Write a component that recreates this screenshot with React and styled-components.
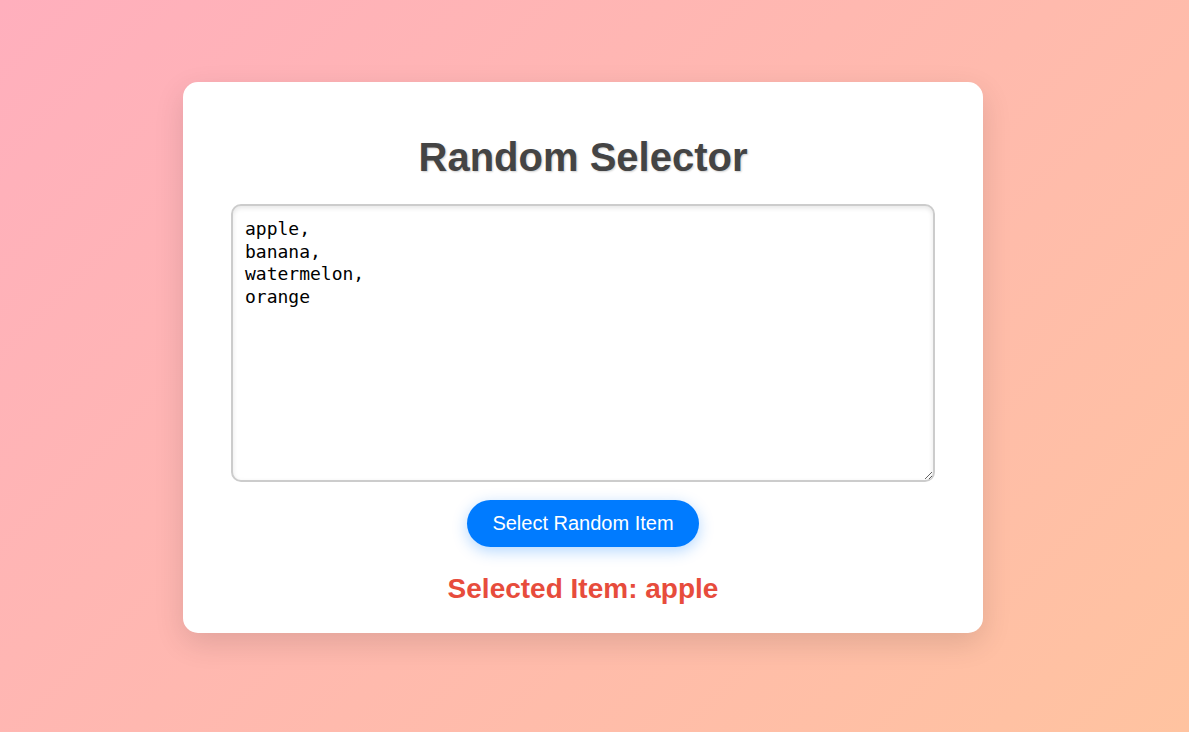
import React, { useState } from "react";
import styled, { createGlobalStyle } from "styled-components";

const GlobalStyle = createGlobalStyle`
  html, body {
    margin: 0;
    padding: 0;
  }
  body {
    font-family: "Liberation Sans", Arial, sans-serif;
    background: linear-gradient(135deg, #ffafbd 0%, #ffc3a0 100%);
    min-height: 100vh;
  }
`;

const Page = styled.div`
  min-height: 100vh;
  box-sizing: border-box;
  padding: 82px 0 0 183px;
  display: flex;
  align-items: flex-start;
`;

const Card = styled.div`
  width: 800px;
  box-sizing: border-box;
  background: #fff;
  border-radius: 15px;
  padding: 48px 48px 28px;
  box-shadow: 0 10px 30px rgba(0, 0, 0, 0.12);
  display: flex;
  flex-direction: column;
  align-items: center;
`;

const Title = styled.h1`
  margin: 5px 0 24px;
  font-size: 40px;
  font-weight: bold;
  color: #444;
  text-shadow: 1px 1px 2px rgba(0, 0, 0, 0.2);
  line-height: normal;
`;

const ItemsInput = styled.textarea`
  display: block;
  width: 100%;
  height: 278px;
  box-sizing: border-box;
  padding: 12px;
  border: 2px solid #ccc;
  border-radius: 10px;
  font-family: "DejaVu Sans Mono", monospace;
  font-size: 18px;
  line-height: 22.7px;
  color: #000;
  box-shadow: inset 0 2px 5px rgba(0, 0, 0, 0.1);
  outline: none;
  margin: 0 0 18px;
`;

const SelectButton = styled.button`
  font-family: "Liberation Sans", Arial, sans-serif;
  font-size: 20px;
  line-height: 23px;
  padding: 12px 25px;
  color: #fff;
  background-color: #007bff;
  border: none;
  border-radius: 30px;
  cursor: pointer;
  box-shadow: 0 4px 15px rgba(0, 123, 255, 0.3);
`;

const Result = styled.div`
  margin-top: 26px;
  font-size: 28px;
  font-weight: bold;
  color: #e74c3c;
  line-height: normal;
`;

export default function App() {
  const [text, setText] = useState("apple,\nbanana,\nwatermelon,\norange");
  const [selected, setSelected] = useState("apple");

  const pick = () => {
    let items = text
      .split(",")
      .map((s) => s.trim())
      .filter((s) => s.length > 0);
    if (items.length === 0) return;
    setSelected(items[Math.floor(Math.random() * items.length)]);
  };

  return (
    <>
      <GlobalStyle />
      <Page>
        <Card>
          <Title>Random Selector</Title>
          <ItemsInput value={text} onChange={(e) => setText(e.target.value)} />
          <SelectButton onClick={pick}>Select Random Item</SelectButton>
          <Result>Selected Item: {selected}</Result>
        </Card>
      </Page>
    </>
  );
}
